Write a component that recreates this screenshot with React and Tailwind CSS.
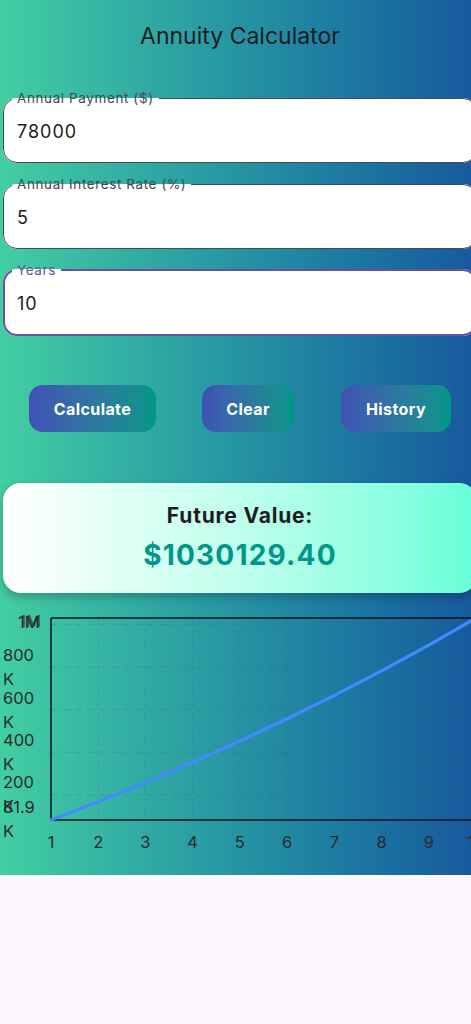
import React from 'react'

const payment = 78000
const rate = 0.05
const years = 10

function futureValue(n) {
  return payment * ((Math.pow(1 + rate, n) - 1) / rate) * (1 + rate)
}

function Field({ label, value, focused }) {
  return (
    <fieldset
      className={
        'rounded-[14px] bg-white px-[13px] pb-[6px] ' +
        (focused ? 'border-2 border-[#6750a4]' : 'border border-[#4a4a4a]')
      }
    >
      <legend
        className={
          'px-[5px] text-[13.5px] leading-[16px] tracking-[0.6px] ' +
          (focused ? 'ml-[-6px] text-[#6750a4]' : 'ml-[-5px] text-[#49454f]')
        }
      >
        {label}
      </legend>
      <div className={'flex h-[50px] items-center text-[18px] tracking-[1px] text-[#1d1b20] ' + (focused ? 'ml-[-1px]' : '')}>
        {value}
      </div>
    </fieldset>
  )
}

function GradButton({ children, className }) {
  return (
    <button
      className={
        'h-[47px] rounded-[14px] bg-linear-to-r from-[#3f51b5] to-[#009688] text-[16px] font-bold tracking-[0.4px] text-white ' +
        className
      }
    >
      {children}
    </button>
  )
}

function Chart() {
  const left = 51
  const right = 476
  const top = 17
  const bottom = 219
  const step = (right - left) / 9
  const min = futureValue(1)
  const max = futureValue(years)
  const yOf = (v) => bottom - ((v - min) / (max - min)) * (bottom - top)
  const pts = []
  for (let n = 1; n <= years; n++) {
    pts.push([left + (n - 1) * step, yOf(futureValue(n))])
  }
  const path = pts.map((p, i) => (i === 0 ? 'M' : 'L') + p[0].toFixed(1) + ' ' + p[1].toFixed(1)).join(' ')
  const grid = [200000, 400000, 600000, 800000, 1000000]

  return (
    <svg width="480" height="274" className="block font-['Inter',sans-serif]">
      {grid.map((g) => (
        <line key={g} x1={left} x2={right} y1={yOf(g)} y2={yOf(g)} stroke="rgba(90,90,90,0.25)" strokeWidth="1" strokeDasharray="7 5" />
      ))}
      {[2, 3, 4, 5, 6, 7, 8, 9].map((n) => (
        <line key={n} x1={left + (n - 1) * step} x2={left + (n - 1) * step} y1={top} y2={bottom} stroke="rgba(90,90,90,0.25)" strokeWidth="1" strokeDasharray="7 5" />
      ))}
      <line x1={left} x2={left} y1={top} y2={bottom} stroke="#111" strokeWidth="1.5" />
      <line x1={left} x2={right} y1={top} y2={top} stroke="#111" strokeWidth="1.5" />
      <line x1={left} x2={right} y1={bottom} y2={bottom} stroke="#111" strokeWidth="1.5" />
      <path d={path} fill="none" stroke="#448aff" strokeWidth="3.2" strokeLinecap="round" strokeLinejoin="round" />

      <g fill="#2a2a2a" fontSize="16.5">
        <text x="18" y="27">1M</text>
        <text x="19.5" y="25.5" opacity="0.7">1M</text>
        <text x="3" y="60">800</text>
        <text x="3" y="84">K</text>
        <text x="3" y="103">600</text>
        <text x="3" y="127">K</text>
        <text x="3" y="145">400</text>
        <text x="3" y="169">K</text>
        <text x="3" y="187">200</text>
        <text x="3" y="211">K</text>
        <text x="3" y="212">81.9</text>
        <text x="3" y="236">K</text>
        {pts.map((p, i) => (
          <text key={i} x={p[0]} y="247" textAnchor="middle">
            {i + 1}
          </text>
        ))}
      </g>
    </svg>
  )
}

export default function App() {
  return (
    <div className="min-h-screen w-full overflow-hidden bg-[#fef7ff] font-['Inter',sans-serif]">
      <div className="w-full overflow-hidden bg-linear-to-r from-[#43cea2] to-[#185a9d]">
        <div className="w-[480px]">
          <div className="flex h-[72px] items-center justify-center text-[23px] text-[#1d1b20]">
            Annuity Calculator
          </div>

          <div className="mt-[18px] flex flex-col gap-[13px] px-[3px]">
            <Field label="Annual Payment ($)" value="78000" />
            <Field label="Annual Interest Rate (%)" value="5" />
            <Field label="Years" value="10" focused />
          </div>

          <div className="mt-[49px] flex pl-[29px]">
            <GradButton className="w-[127px]">Calculate</GradButton>
            <GradButton className="ml-[46px] w-[92px]">Clear</GradButton>
            <GradButton className="ml-[47px] w-[110px]">History</GradButton>
          </div>

          <div className="mx-[3px] mt-[51px] flex h-[110px] flex-col items-center justify-center rounded-[18px] bg-linear-to-r from-white to-[#64ffda] shadow-[0_4px_10px_rgba(0,0,0,0.25)]">
            <div className="text-[21px] font-bold tracking-[0.8px] text-[#1d1b20]">Future Value:</div>
            <div className="mt-[3px] text-[28px] font-bold tracking-[1.2px] text-[#009688]">$1030129.40</div>
          </div>

          <div className="mt-[8px]">
            <Chart />
          </div>
        </div>
      </div>
    </div>
  )
}
